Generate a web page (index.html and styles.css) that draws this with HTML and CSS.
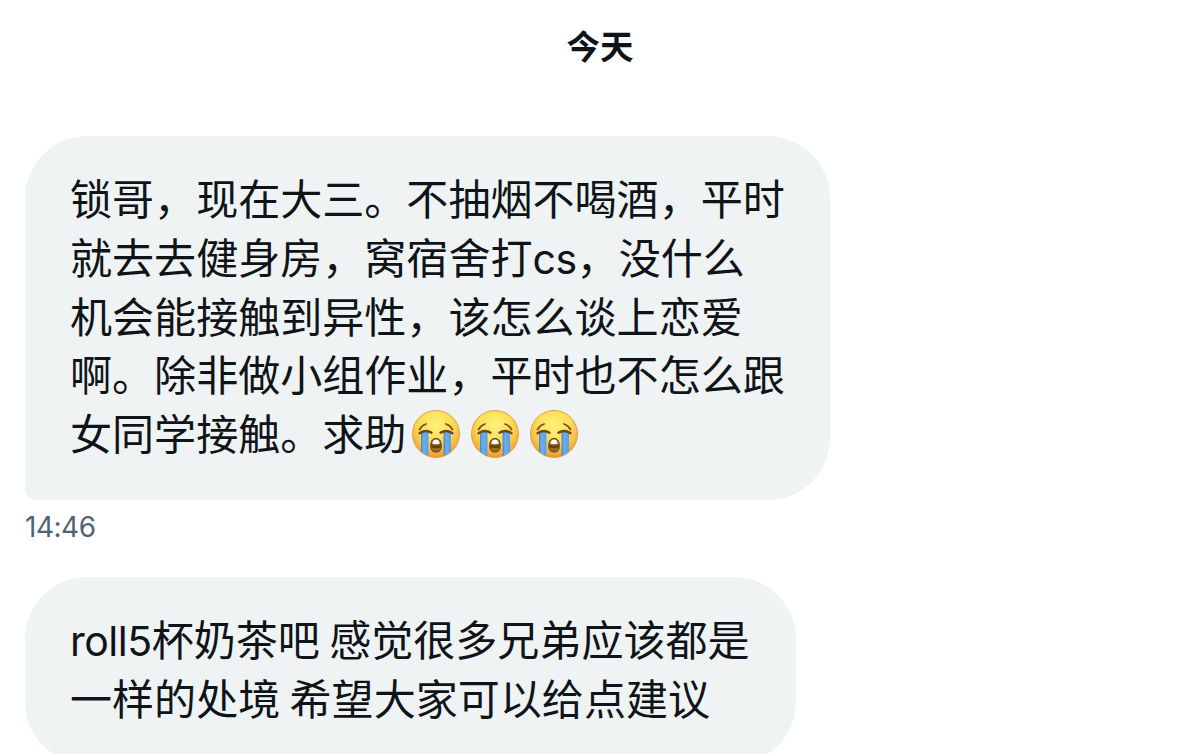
FILE: index.html
```html
<!DOCTYPE html>
<html lang="zh-CN">

<head>
  <meta charset="UTF-8">
  <meta name="viewport" content="width=device-width, initial-scale=1.0">
  <title>私信</title>
  <link rel="stylesheet" href="styles.css">
</head>

<body>
  <svg class="symbols" aria-hidden="true">
    <defs>
      <radialGradient id="face-fill" cx="0.5" cy="0.32" r="0.7">
        <stop offset="0" stop-color="#fff37c" />
        <stop offset="0.5" stop-color="#fddd58" />
        <stop offset="0.8" stop-color="#f5b53d" />
        <stop offset="1" stop-color="#e2902e" />
      </radialGradient>
      <linearGradient id="tear-fill" x1="0" y1="0" x2="1" y2="0">
        <stop offset="0" stop-color="#4486d0" />
        <stop offset="0.35" stop-color="#69aeef" />
        <stop offset="1" stop-color="#5a9fe3" />
      </linearGradient>
      <symbol id="crying" viewBox="0 0 50 50">
        <circle cx="25" cy="25" r="23.500" fill="url(#face-fill)" stroke="#e79a38" stroke-width="0.900" />
        <path d="M10 23H17.500V47Q13 45 10 42.500Z" fill="url(#tear-fill)" />
        <path d="M32.500 23H40V42.500Q37 45 32.500 47Z" fill="url(#tear-fill)" />
        <path d="M8.500 20.500Q10.500 16.500 15 15M35 15Q39.500 16.500 41.500 20.500" fill="none" stroke="#80501c" stroke-width="1.800" stroke-linecap="round" />
        <path d="M8.500 24.200Q15 20 20.500 23.700M29.500 23.700Q35 20 41.500 24.200" fill="none" stroke="#70451a" stroke-width="2.400" stroke-linecap="round" />
        <path d="M25 29.500C28.500 29.500 30.300 32 30.300 36.500C30.300 41.500 28.500 43 25 43C21.500 43 19.700 41.500 19.700 36.500C19.700 32 21.500 29.500 25 29.500Z" fill="#9a6a22" stroke="#5f3b13" stroke-width="1" />
        <path d="M20.200 35.500Q25 37.500 29.800 35.500Q30 39 28 39H22Q20 39 20.200 35.500Z" fill="#65400f" />
        <path d="M21.200 34.500Q22 30.500 25 30.500Q28 30.500 28.800 34.500Q25 36 21.200 34.500Z" fill="#fff" />
      </symbol>
    </defs>
  </svg>
  <main class="chat">
    <h1 class="chat-date">今天</h1>
    <section class="message">
      <p class="bubble bubble-tail">锁哥，现在大三。不抽烟不喝酒，平时<br>就去去健身房，窝宿舍打<span class="latin">cs</span>，没什么<br>机会能接触到异性，该怎么谈上恋爱<br>啊。除非做小组作业，平时也不怎么跟<br>女同学接触。求助<svg class="emoji"><use href="#crying" /></svg><svg class="emoji"><use href="#crying" /></svg><svg class="emoji"><use href="#crying" /></svg></p>
      <time class="message-time">14:46</time>
    </section>
    <section class="message">
      <p class="bubble bubble-short"><span class="latin">roll5</span>杯奶茶吧 感觉很多兄弟应该都是<br>一样的处境 希望大家可以给点建议</p>
    </section>
  </main>
</body>

</html>
```
FILE: styles.css
```css
body {
  margin: 0;
  background-color: #fff;
  color: #0f1419;
  font-family: Inter, "Noto Sans CJK SC", sans-serif;
  height: 754px;
  overflow: hidden;
}

.symbols {
  display: block;
  width: 0;
  height: 0;
}

.chat {
  padding: 0 25px;
}

.chat-date {
  margin: 0;
  padding: 22px 0 64px;
  font-size: 33.5px;
  line-height: 50px;
  font-weight: 600;
  text-align: center;
}

.message {
  display: flex;
  flex-direction: column;
  align-items: flex-start;
}

.bubble {
  box-sizing: border-box;
  width: 805px;
  height: 364px;
  margin: 0;
  padding: 35px 45px;
  border-radius: 62px;
  background-color: #eff3f4;
  font-size: 42.05px;
  line-height: 58.8px;
  white-space: nowrap;
  word-spacing: -2.5px;
}

.bubble-tail {
  border-bottom-left-radius: 12px;
}

.bubble-short {
  width: 771px;
  height: 187px;
}

.latin {
  font-size: 41px;
  line-height: 1;
  letter-spacing: -0.5px;
}

.emoji {
  width: 50px;
  height: 50px;
  margin: 0 4px 0 5px;
  vertical-align: -9px;
}

.message-time {
  margin: 9px 0 32px;
  color: #536471;
  font-size: 28px;
  line-height: 36px;
  letter-spacing: -0.5px;
}
```
